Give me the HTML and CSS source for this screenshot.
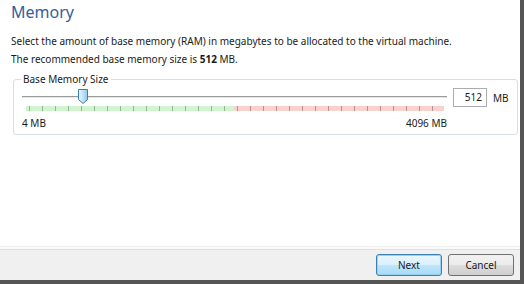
FILE: index.html
```html
<!DOCTYPE html>
<html>
<head>
<meta charset="utf-8">
<link rel="stylesheet" href="styles.css">
</head>
<body>
<div class="window">
  <div class="inner">
    <div class="content">
      <h1 class="title">Memory</h1>
      <p class="desc">Select the amount of base memory (RAM) in megabytes to be allocated to the virtual machine.</p>
      <p class="desc">The recommended base memory size is <b>512</b> MB.</p>
      <fieldset class="group">
        <legend class="legend">Base Memory Size</legend>
        <div class="row">
          <div class="slider">
            <div class="track-area">
              <div class="track"></div>
              <svg class="thumb" width="12" height="17" viewBox="0 0 12 17">
                <defs>
                  <linearGradient id="tg" x1="0" y1="0" x2="1" y2="0">
                    <stop offset="0" stop-color="#e8f6fd"/>
                    <stop offset="0.5" stop-color="#bfe4f7"/>
                    <stop offset="1" stop-color="#8fcbea"/>
                  </linearGradient>
                </defs>
                <path d="M1.5 1.5 H10.5 V11.5 L6 15.5 L1.5 11.5 Z" fill="url(#tg)" stroke="#3c7fb1" stroke-width="1"/>
              </svg>
            </div>
            <div class="ticks">
              <div class="green"></div>
              <div class="red"></div>
            </div>
            <div class="labels"><span>4 MB</span><span>4096 MB</span></div>
          </div>
          <div class="value">
            <div class="input">512</div>
            <span class="unit">MB</span>
          </div>
        </div>
      </fieldset>
    </div>
    <div class="sep"></div>
    <div class="buttons">
      <button class="btn default">Next</button>
      <button class="btn">Cancel</button>
    </div>
  </div>
</div>
</body>
</html>
```

FILE: styles.css
```css
html, body {
  margin: 0;
  padding: 0;
  background: #ffffff;
}
body {
  width: 524px;
  height: 284px;
  overflow: hidden;
  font-family: "Noto Sans", "DejaVu Sans", sans-serif;
  font-size: 10px;
  color: #1a1a1a;
}
.window {
  width: 524px;
  height: 284px;
  box-sizing: border-box;
  display: flex;
  flex-direction: column;
  background: #555;
  padding: 0 4px 4px 0;
}
.inner {
  flex: 1;
  display: flex;
  flex-direction: column;
  background: #fff;
}
.content {
  flex: 1;
  padding: 0 6px 0 11px;
}
.title {
  margin: 1px 0 0 0;
  font-weight: normal;
  font-size: 16px;
  line-height: 22px;
  color: #33609a;
}
.desc {
  margin: 0;
  line-height: 18px;
}
.title + .desc {
  margin-top: 9px;
}
.desc b {
  font-weight: bold;
}
.group {
  margin: 4px 0 0 2px;
  padding: 2px 8px 3px 8px;
  border: 1px solid #d5dfe5;
  border-radius: 3px;
}
.legend {
  padding: 0 2px;
  margin-left: -1px;
  line-height: 14px;
}
.row {
  display: flex;
  align-items: flex-start;
}
.slider {
  width: 425px;
}
.track-area {
  position: relative;
  height: 18px;
}
.track {
  position: absolute;
  left: 0;
  right: 0;
  top: 8px;
  height: 1px;
  background: #9a9a9a;
  border-bottom: 1px solid #e6e6e6;
}
.thumb {
  position: absolute;
  left: 55px;
  top: 0;
}
.ticks {
  display: flex;
  height: 5px;
  margin: 0 3px 0 4px;
  background-image: repeating-linear-gradient(to right, transparent 0, transparent 3px, #8a8a8a 3px, #8a8a8a 4px, transparent 4px, transparent 13px);
}
.green {
  flex: 0 0 208px;
  background: rgba(150, 230, 150, 0.45);
}
.red {
  flex: 1;
  background: rgba(245, 155, 145, 0.45);
}
.labels {
  display: flex;
  justify-content: space-between;
  margin-top: 5px;
  line-height: 15px;
}
.value {
  display: flex;
  align-items: center;
  margin-left: 6px;
  margin-top: 0;
}
.input {
  width: 28px;
  height: 17px;
  border: 1px solid #abadb3;
  text-align: right;
  padding-right: 4px;
  line-height: 17px;
  background: #fff;
}
.unit {
  margin-left: 6px;
}
.sep {
  height: 2px;
  border-top: 1px solid #f0f0f0;
  border-bottom: 1px solid #dfdfdf;
  background: #fafafa;
}
.buttons {
  height: 30px;
  background: #f0f0f0;
  display: flex;
  justify-content: flex-end;
  align-items: center;
  gap: 6px;
  padding: 0 6px 0 0;
}
.btn {
  width: 66px;
  height: 22px;
  font-family: inherit;
  font-size: 10px;
  color: #1a1a1a;
  border: 1px solid #707070;
  border-radius: 3px;
  background: linear-gradient(#f2f2f2 0, #ebebeb 50%, #dddddd 50%, #cfcfcf 100%);
  padding: 0;
}
.btn.default {
  border-color: #3c7fb1;
  background: linear-gradient(#eaf6fd 0, #d9f0fc 50%, #bee6fd 50%, #a7d9f5 100%);
  box-shadow: inset 0 0 0 1px #98d1ef;
}
```
